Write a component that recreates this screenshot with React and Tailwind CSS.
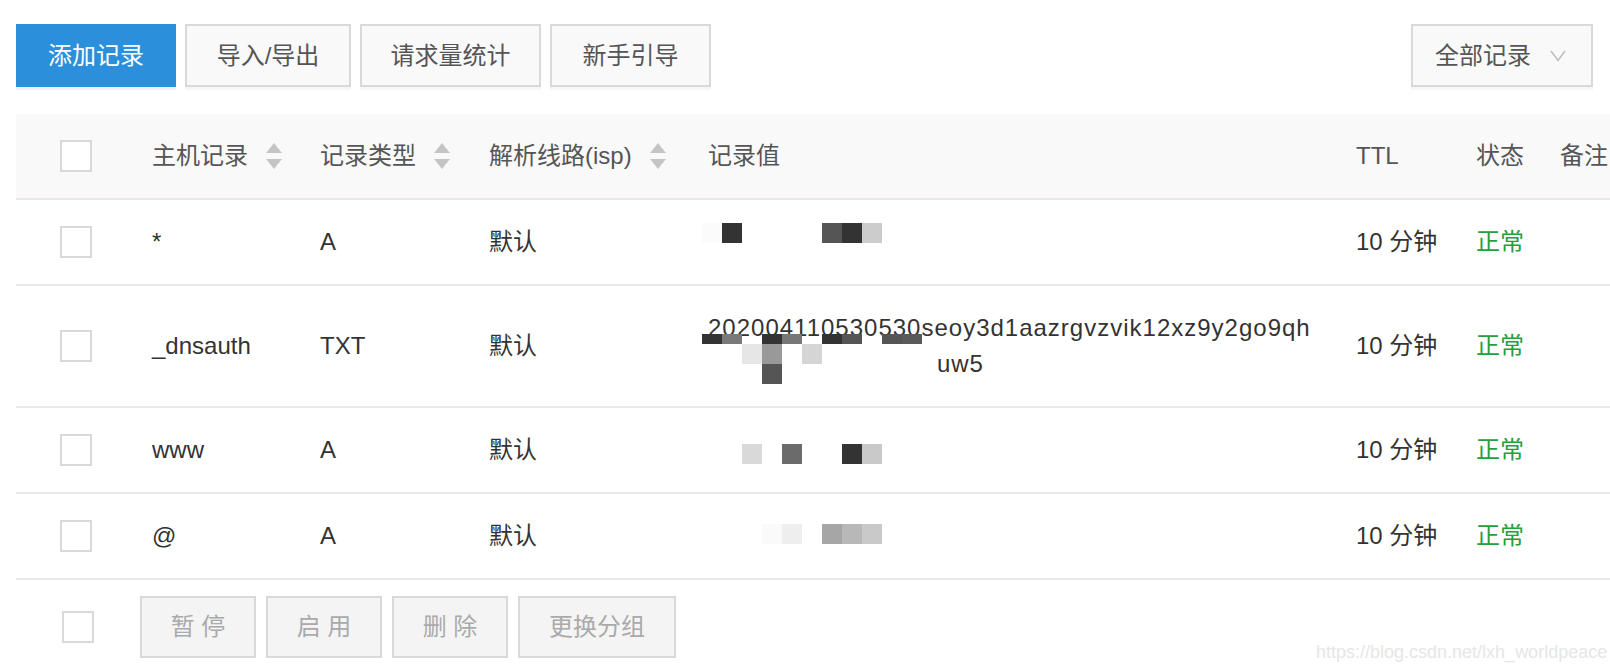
import React from "react";

function Checkbox() {
  return <div className="w-8 h-8 border-2 border-[#d9d9d9] bg-white box-border shrink-0" />;
}

function SortIcon() {
  return (
    <svg width="16" height="26" viewBox="0 0 16 26" className="shrink-0">
      <polygon points="8,0 16,10 0,10" fill="#c4c4c4" />
      <polygon points="0,16 16,16 8,26" fill="#c4c4c4" />
    </svg>
  );
}

function Mosaic({ blocks }) {
  return (
    <>
      {blocks.map((b, i) => (
        <div
          key={i}
          className="absolute"
          style={{ left: b[0] - 708, top: b[1], width: 20, height: b[3] || 20, background: b[2] }}
        />
      ))}
    </>
  );
}

const rows = [
  {
    host: "*",
    type: "A",
    h: "h-[86px]",
    mosaic: [
      [702, 23, "#fbfbfb"],
      [722, 23, "#333333"],
      [822, 23, "#555555"],
      [842, 23, "#333333"],
      [862, 23, "#cccccc"],
    ],
  },
  {
    host: "_dnsauth",
    type: "TXT",
    h: "h-[122px]",
    txt: true,
    mosaic: [
      [702, 48, "#333333", 10],
      [722, 48, "#7a7a7a", 10],
      [762, 48, "#333333", 10],
      [782, 48, "#777777", 10],
      [822, 48, "#333333", 10],
      [842, 48, "#555555", 10],
      [882, 48, "#555555", 10],
      [902, 48, "#5a5a5a", 10],
      [742, 58, "#e6e6e6"],
      [762, 58, "#999999"],
      [802, 58, "#d5d5d5"],
      [762, 78, "#555555"],
    ],
  },
  {
    host: "www",
    type: "A",
    h: "h-[86px]",
    mosaic: [
      [742, 36, "#d9d9d9"],
      [782, 36, "#6b6b6b"],
      [842, 36, "#333333"],
      [862, 36, "#c9c9c9"],
    ],
  },
  {
    host: "@",
    type: "A",
    h: "h-[86px]",
    mosaic: [
      [762, 30, "#fafafa"],
      [782, 30, "#eeeeee"],
      [822, 30, "#a6a6a6"],
      [842, 30, "#b8b8b8"],
      [862, 30, "#c9c9c9"],
    ],
  },
];

export default function App() {
  return (
    <div className="relative w-[1610px] h-[672px] overflow-hidden bg-white font-['Liberation_Sans','Noto_Sans_CJK_SC',sans-serif] text-[24px] leading-[36px]">
      {/* Toolbar */}
      <div className="flex justify-between pt-6 pl-4 pr-[17px]">
        <div className="flex gap-[9px]">
          <button className="w-[160px] h-[63px] bg-[#2b8fdc] text-white shadow-[0_3px_0_#f1f2f5]">添加记录</button>
          <button className="w-[166px] h-[63px] bg-[#f9f9f9] border-2 border-[#d9d9d9] text-[#555] shadow-[0_3px_0_#f6f6f6]">导入/导出</button>
          <button className="w-[181px] h-[63px] bg-[#f9f9f9] border-2 border-[#d9d9d9] text-[#555] shadow-[0_3px_0_#f6f6f6]">请求量统计</button>
          <button className="w-[161px] h-[63px] bg-[#f9f9f9] border-2 border-[#d9d9d9] text-[#555] shadow-[0_3px_0_#f6f6f6]">新手引导</button>
        </div>
        <button className="w-[182px] h-[63px] bg-[#f9f9f9] border-2 border-[#d9d9d9] text-[#555] shadow-[0_3px_0_#f6f6f6] flex items-center pl-[22px]">
          <span>全部记录</span>
          <svg width="16" height="12" viewBox="0 0 16 12" className="ml-[19px]">
            <polyline points="1,1 8,10.5 15,1" fill="none" stroke="#bdbdbd" strokeWidth="1.6" />
          </svg>
        </button>
      </div>

      {/* Table */}
      <div className="ml-4 mt-[27px] w-[1700px]">
        <div className="flex items-center h-[86px] bg-[#f9f9f9] border-b-2 border-[#e6e9ed] text-[#555]">
          <div className="w-[136px] pl-[44px] flex items-center"><Checkbox /></div>
          <div className="w-[168px] flex items-center gap-[18px]"><span>主机记录</span><SortIcon /></div>
          <div className="w-[169px] flex items-center gap-[18px]"><span>记录类型</span><SortIcon /></div>
          <div className="w-[219px] flex items-center gap-[18px]"><span>解析线路(isp)</span><SortIcon /></div>
          <div className="w-[648px]">记录值</div>
          <div className="w-[120px]">TTL</div>
          <div className="w-[84px]">状态</div>
          <div className="w-[150px]">备注</div>
        </div>

        {rows.map((r, i) => (
          <div key={i} className={`flex items-center border-b-2 border-[#e6e9ed] text-[#333] ${r.h}`}>
            <div className="w-[136px] pl-[44px] flex items-center"><Checkbox /></div>
            <div className="w-[168px]">{r.host}</div>
            <div className="w-[169px]">{r.type}</div>
            <div className="w-[219px]">默认</div>
            <div className="w-[648px] self-stretch relative flex flex-col justify-center">
              {r.txt ? (
                <>
                  <div className="tracking-[1px] whitespace-nowrap">202004110530530seoy3d1aazrgvzvik12xz9y2go9qh</div>
                  <div className="pl-[229px] tracking-[0.9px]">uw5</div>
                </>
              ) : null}
              <Mosaic blocks={r.mosaic} />
            </div>
            <div className="w-[120px]">10 分钟</div>
            <div className="w-[84px] text-[#22a03c]">正常</div>
            <div className="w-[150px]"></div>
          </div>
        ))}

        {/* Footer */}
        <div className="flex items-center pt-4">
          <div className="ml-[46px] mr-[46px]"><Checkbox /></div>
          <div className="flex gap-[10px] text-[#aaa]">
            <button className="w-[116px] h-[62px] bg-[#f4f4f4] border-2 border-[#d9d9d9]">暂 停</button>
            <button className="w-[116px] h-[62px] bg-[#f4f4f4] border-2 border-[#d9d9d9]">启 用</button>
            <button className="w-[116px] h-[62px] bg-[#f4f4f4] border-2 border-[#d9d9d9]">删 除</button>
            <button className="w-[158px] h-[62px] bg-[#f4f4f4] border-2 border-[#d9d9d9]">更换分组</button>
          </div>
        </div>
      </div>

      <div className="absolute left-[1316px] top-[641px] text-[18px] leading-[22px] text-[#e6e6e6] whitespace-nowrap">
        https://blog.csdn.net/lxh_worldpeace
      </div>
    </div>
  );
}
